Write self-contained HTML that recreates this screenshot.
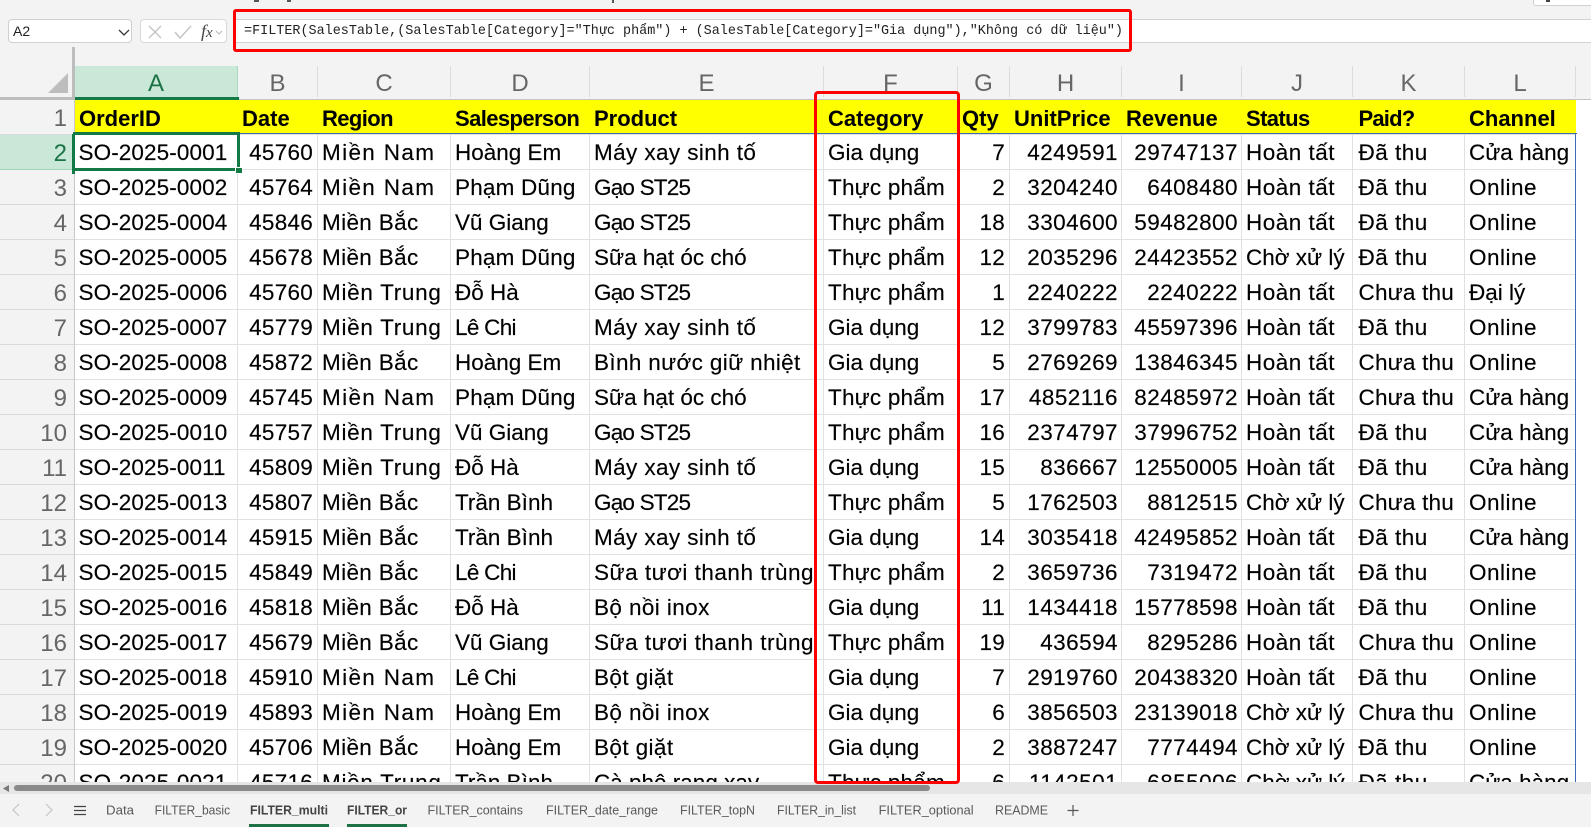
<!DOCTYPE html>
<html lang="vi"><head><meta charset="utf-8"><title>Excel FILTER</title>
<style>
html,body{margin:0;padding:0;width:1591px;height:827px;overflow:hidden;background:#f3f3f3}
body{position:relative;font-family:"Liberation Sans","DejaVu Sans",sans-serif;color:#000}
.a{position:absolute;box-sizing:border-box}
#sheet{position:absolute;left:0;top:100px;width:1591px;height:682px;overflow:hidden;background:#fff}
table{border-collapse:separate;border-spacing:0;table-layout:fixed;width:1576px;position:absolute;left:0;top:0}
td,th{box-sizing:border-box;height:35px;padding:2px 4px 0;line-height:32px;font-size:22.5px;font-weight:400;white-space:nowrap;overflow:hidden;text-align:left;border-right:1px solid #e1e1e1;border-bottom:1px solid #e1e1e1}
td{-webkit-text-stroke:.15px #000}
th{padding-top:3px;line-height:31px}
td.n{text-align:right;padding-right:4px;letter-spacing:.25px}
td:nth-child(2){letter-spacing:.1px;padding-left:3.5px}
td:nth-child(9),td:nth-child(10){letter-spacing:.45px;padding-right:3px}
td:nth-child(12),th:nth-child(12){padding-left:5.5px}
td.h,th.h{background:#f3f3f3;color:#666;font-size:24px;font-weight:400;text-align:right;padding-right:7px;padding-top:3px;line-height:31px;border-right:1px solid #c8c8c8;border-bottom:1px solid #d9d9d9;letter-spacing:0;-webkit-text-stroke:0}
tr.head th:not(.h){background:#ff0;font-size:22px;font-weight:700;border-right:0;border-bottom:1px solid #e1e1e1}
td.h.sel{background:#c9e8d7;color:#1c7346;border-bottom-color:#9fd5b7}
.col{position:absolute;top:66px;height:31px;text-align:center;color:#666;font-size:24px;line-height:35px;border-right:1px solid #dcdcdc;box-sizing:border-box}
.m{letter-spacing:.5px}.g{letter-spacing:-.8px}.w{letter-spacing:.4px}.t{letter-spacing:.5px}
.nm{letter-spacing:1.35px}.tr{letter-spacing:.7px}.bc{letter-spacing:.35px}.c{letter-spacing:-.7px}.ph{letter-spacing:.2px}
.tg{letter-spacing:-.6px}
</style></head><body>

<!-- top strip remnants -->
<div class="a" style="left:254px;top:0;width:5px;height:2px;background:#555"></div>
<div class="a" style="left:287px;top:0;width:4px;height:2px;background:#555"></div>
<div class="a" style="left:612px;top:0;width:2px;height:3px;background:#555"></div>
<div class="a" style="left:1533px;top:-6px;width:60px;height:12px;background:#fff;border:1px solid #d0d0d0;border-radius:3px"></div>
<div class="a" style="left:1546px;top:0;width:4px;height:2px;background:#444"></div>

<!-- formula bar -->
<div class="a" style="left:8px;top:19px;width:124px;height:24px;background:#fff;border:1px solid #d0d0d0;border-radius:4px"></div>
<div class="a" style="left:13px;top:22px;font-size:14px;line-height:18px;color:#222">A2</div>
<svg class="a" style="left:117px;top:28px" width="14" height="9"><path d="M2 2 L7 7 L12 2" fill="none" stroke="#333" stroke-width="1.3"/></svg>
<div class="a" style="left:140px;top:19px;width:87px;height:24px;background:#fff;border:1px solid #d8d8d8;border-radius:4px"></div>
<svg class="a" style="left:147px;top:24px" width="80" height="16">
<path d="M2 2 L14 14 M14 2 L2 14" stroke="#c4c4c4" stroke-width="1.4" fill="none"/>
<path d="M28 8 L33 14 L44 2" stroke="#c4c4c4" stroke-width="1.4" fill="none"/>
<path d="M69 7 L72 10 L75 7" stroke="#b5b5b5" stroke-width="1" fill="none"/>
</svg>
<div class="a" style="left:201px;top:22px;font-family:'Liberation Serif',serif;font-style:italic;font-size:18px;line-height:19px;color:#444">f<span style="font-size:15px">x</span></div>
<div class="a" style="left:233px;top:19px;width:1358px;height:24px;background:#fff;border-top:1px solid #d2d2d2;border-bottom:1px solid #d2d2d2"></div>
<div class="a" style="left:244px;top:23px;font-family:'Liberation Mono','DejaVu Sans Mono',monospace;font-size:13.45px;line-height:18px;white-space:pre;color:#222">=FILTER(SalesTable,(SalesTable[Category]="Thực phẩm") + (SalesTable[Category]="Gia dụng"),"Không có dữ liệu")</div>

<!-- column headers -->
<div class="a" style="left:0;top:66px;width:75px;height:31px;background:#f3f3f3"></div>
<div class="col" style="left:75px;width:163px;background:#c9e8d7;color:#1c7346;border-right-color:#a9d8be">A</div>
<div class="col" style="left:238px;width:80px">B</div>
<div class="col" style="left:318px;width:133px">C</div>
<div class="col" style="left:451px;width:139px">D</div>
<div class="col" style="left:590px;width:234px">E</div>
<div class="col" style="left:824px;width:134px">F</div>
<div class="col" style="left:958px;width:52px">G</div>
<div class="col" style="left:1010px;width:112px">H</div>
<div class="col" style="left:1122px;width:120px">I</div>
<div class="col" style="left:1242px;width:111px">J</div>
<div class="col" style="left:1353px;width:112px">K</div>
<div class="col" style="left:1465px;width:111px">L</div>
<svg class="a" style="left:46px;top:71px" width="24" height="24"><path d="M22 2 V22 H2 Z" fill="#bdbdbd"/></svg>
<div class="a" style="left:72px;top:47px;width:3px;height:53px;background:#bdbdbd"></div>
<div class="a" style="left:0;top:97px;width:75px;height:3px;background:#bdbdbd"></div>
<div class="a" style="left:75px;top:99px;width:1516px;height:1px;background:#c4c4c4"></div>

<!-- grid -->
<div id="sheet">
<table>
<colgroup><col style="width:75px"><col style="width:163px"><col style="width:80px"><col style="width:133px"><col style="width:139px"><col style="width:234px"><col style="width:134px"><col style="width:52px"><col style="width:112px"><col style="width:120px"><col style="width:111px"><col style="width:112px"><col style="width:111px"></colgroup>
<tr class="head"><th class="h">1</th><th>OrderID</th><th>Date</th><th class="tg">Region</th><th class="tg">Salesperson</th><th>Product</th><th>Category</th><th>Qty</th><th>UnitPrice</th><th>Revenue</th><th class="tg">Status</th><th class="g">Paid?</th><th>Channel</th></tr>
<tr><td class="h sel">2</td><td>SO-2025-0001</td><td class="n">45760</td><td class="nm">Miền Nam</td><td>Hoàng Em</td><td class="w">Máy xay sinh tố</td><td>Gia dụng</td><td class="n">7</td><td class="n">4249591</td><td class="n">29747137</td><td class="t">Hoàn tất</td><td class="t">Đã thu</td><td>Cửa hàng</td></tr>
<tr><td class="h">3</td><td>SO-2025-0002</td><td class="n">45764</td><td class="nm">Miền Nam</td><td class="ph">Phạm Dũng</td><td class="g">Gạo ST25</td><td class="ph">Thực phẩm</td><td class="n">2</td><td class="n">3204240</td><td class="n">6408480</td><td class="t">Hoàn tất</td><td class="t">Đã thu</td><td class="t">Online</td></tr>
<tr><td class="h">4</td><td>SO-2025-0004</td><td class="n">45846</td><td class="bc">Miền Bắc</td><td>Vũ Giang</td><td class="g">Gạo ST25</td><td class="ph">Thực phẩm</td><td class="n">18</td><td class="n">3304600</td><td class="n">59482800</td><td class="t">Hoàn tất</td><td class="t">Đã thu</td><td class="t">Online</td></tr>
<tr><td class="h">5</td><td>SO-2025-0005</td><td class="n">45678</td><td class="bc">Miền Bắc</td><td class="ph">Phạm Dũng</td><td>Sữa hạt óc chó</td><td class="ph">Thực phẩm</td><td class="n">12</td><td class="n">2035296</td><td class="n">24423552</td><td>Chờ xử lý</td><td class="t">Đã thu</td><td class="t">Online</td></tr>
<tr><td class="h">6</td><td>SO-2025-0006</td><td class="n">45760</td><td class="tr">Miền Trung</td><td>Đỗ Hà</td><td class="g">Gạo ST25</td><td class="ph">Thực phẩm</td><td class="n">1</td><td class="n">2240222</td><td class="n">2240222</td><td class="t">Hoàn tất</td><td class="ph">Chưa thu</td><td>Đại lý</td></tr>
<tr><td class="h">7</td><td>SO-2025-0007</td><td class="n">45779</td><td class="tr">Miền Trung</td><td class="c">Lê Chi</td><td class="w">Máy xay sinh tố</td><td>Gia dụng</td><td class="n">12</td><td class="n">3799783</td><td class="n">45597396</td><td class="t">Hoàn tất</td><td class="t">Đã thu</td><td class="t">Online</td></tr>
<tr><td class="h">8</td><td>SO-2025-0008</td><td class="n">45872</td><td class="bc">Miền Bắc</td><td>Hoàng Em</td><td class="bc">Bình nước giữ nhiệt</td><td>Gia dụng</td><td class="n">5</td><td class="n">2769269</td><td class="n">13846345</td><td class="t">Hoàn tất</td><td class="ph">Chưa thu</td><td class="t">Online</td></tr>
<tr><td class="h">9</td><td>SO-2025-0009</td><td class="n">45745</td><td class="nm">Miền Nam</td><td class="ph">Phạm Dũng</td><td>Sữa hạt óc chó</td><td class="ph">Thực phẩm</td><td class="n">17</td><td class="n">4852116</td><td class="n">82485972</td><td class="t">Hoàn tất</td><td class="ph">Chưa thu</td><td>Cửa hàng</td></tr>
<tr><td class="h">10</td><td>SO-2025-0010</td><td class="n">45757</td><td class="tr">Miền Trung</td><td>Vũ Giang</td><td class="g">Gạo ST25</td><td class="ph">Thực phẩm</td><td class="n">16</td><td class="n">2374797</td><td class="n">37996752</td><td class="t">Hoàn tất</td><td class="t">Đã thu</td><td>Cửa hàng</td></tr>
<tr><td class="h">11</td><td>SO-2025-0011</td><td class="n">45809</td><td class="tr">Miền Trung</td><td>Đỗ Hà</td><td class="w">Máy xay sinh tố</td><td>Gia dụng</td><td class="n">15</td><td class="n">836667</td><td class="n">12550005</td><td class="t">Hoàn tất</td><td class="t">Đã thu</td><td>Cửa hàng</td></tr>
<tr><td class="h">12</td><td>SO-2025-0013</td><td class="n">45807</td><td class="bc">Miền Bắc</td><td>Trần Bình</td><td class="g">Gạo ST25</td><td class="ph">Thực phẩm</td><td class="n">5</td><td class="n">1762503</td><td class="n">8812515</td><td>Chờ xử lý</td><td class="ph">Chưa thu</td><td class="t">Online</td></tr>
<tr><td class="h">13</td><td>SO-2025-0014</td><td class="n">45915</td><td class="bc">Miền Bắc</td><td>Trần Bình</td><td class="w">Máy xay sinh tố</td><td>Gia dụng</td><td class="n">14</td><td class="n">3035418</td><td class="n">42495852</td><td class="t">Hoàn tất</td><td class="t">Đã thu</td><td>Cửa hàng</td></tr>
<tr><td class="h">14</td><td>SO-2025-0015</td><td class="n">45849</td><td class="bc">Miền Bắc</td><td class="c">Lê Chi</td><td class="m">Sữa tươi thanh trùng</td><td class="ph">Thực phẩm</td><td class="n">2</td><td class="n">3659736</td><td class="n">7319472</td><td class="t">Hoàn tất</td><td class="t">Đã thu</td><td class="t">Online</td></tr>
<tr><td class="h">15</td><td>SO-2025-0016</td><td class="n">45818</td><td class="bc">Miền Bắc</td><td>Đỗ Hà</td><td class="w">Bộ nồi inox</td><td>Gia dụng</td><td class="n">11</td><td class="n">1434418</td><td class="n">15778598</td><td class="t">Hoàn tất</td><td class="t">Đã thu</td><td class="t">Online</td></tr>
<tr><td class="h">16</td><td>SO-2025-0017</td><td class="n">45679</td><td class="bc">Miền Bắc</td><td>Vũ Giang</td><td class="m">Sữa tươi thanh trùng</td><td class="ph">Thực phẩm</td><td class="n">19</td><td class="n">436594</td><td class="n">8295286</td><td class="t">Hoàn tất</td><td class="ph">Chưa thu</td><td class="t">Online</td></tr>
<tr><td class="h">17</td><td>SO-2025-0018</td><td class="n">45910</td><td class="nm">Miền Nam</td><td class="c">Lê Chi</td><td class="w">Bột giặt</td><td>Gia dụng</td><td class="n">7</td><td class="n">2919760</td><td class="n">20438320</td><td class="t">Hoàn tất</td><td class="t">Đã thu</td><td class="t">Online</td></tr>
<tr><td class="h">18</td><td>SO-2025-0019</td><td class="n">45893</td><td class="nm">Miền Nam</td><td>Hoàng Em</td><td class="w">Bộ nồi inox</td><td>Gia dụng</td><td class="n">6</td><td class="n">3856503</td><td class="n">23139018</td><td>Chờ xử lý</td><td class="ph">Chưa thu</td><td class="t">Online</td></tr>
<tr><td class="h">19</td><td>SO-2025-0020</td><td class="n">45706</td><td class="bc">Miền Bắc</td><td>Hoàng Em</td><td class="w">Bột giặt</td><td>Gia dụng</td><td class="n">2</td><td class="n">3887247</td><td class="n">7774494</td><td>Chờ xử lý</td><td class="t">Đã thu</td><td class="t">Online</td></tr>
<tr><td class="h">20</td><td>SO-2025-0021</td><td class="n">45716</td><td class="tr">Miền Trung</td><td>Trần Bình</td><td>Cà phê rang xay</td><td class="ph">Thực phẩm</td><td class="n">6</td><td class="n">1142501</td><td class="n">6855006</td><td>Chờ xử lý</td><td class="t">Đã thu</td><td>Cửa hàng</td></tr>
</table>
</div>

<!-- table edge -->
<div class="a" style="left:240px;top:133px;width:1337px;height:1px;background:#3c6cb4"></div>
<div class="a" style="left:1575px;top:133px;width:1px;height:649px;background:#3c6cb4"></div>

<!-- selection -->
<div class="a" style="left:75px;top:97px;width:164px;height:3px;background:#137a45"></div>
<div class="a" style="left:72px;top:134px;width:3px;height:40px;background:#137a45"></div>
<div class="a" style="left:73px;top:132px;width:167px;height:3px;background:#137a45"></div>
<div class="a" style="left:73px;top:168px;width:167px;height:3px;background:#137a45"></div>
<div class="a" style="left:237px;top:132px;width:3px;height:38px;background:#137a45"></div>
<div class="a" style="left:235px;top:167px;width:8px;height:7px;background:#137a45;border:1px solid #fff"></div>

<!-- scrollbar -->
<div class="a" style="left:0;top:782px;width:1591px;height:12px;background:#e6e6e6"></div>
<div class="a" style="left:14px;top:785px;width:916px;height:6px;background:#8a8a8a;border-radius:3px"></div>
<svg class="a" style="left:2px;top:784px" width="8" height="9"><path d="M1 4.5 L7 1 V8 Z" fill="#777"/></svg>

<!-- tabs -->
<svg class="a" style="left:0;top:794px" width="1591" height="33">
<path d="M19 10 L13 16 L19 22" fill="none" stroke="#c4c4c4" stroke-width="1.2"/>
<path d="M46 10 L52 16 L46 22" fill="none" stroke="#c4c4c4" stroke-width="1.2"/>
<path d="M74 12.5 H86 M74 16.5 H86 M74 20.5 H86" stroke="#444" stroke-width="1.2"/>
<g font-family="Liberation Sans, sans-serif" font-size="12.5" fill="#595959">
<text x="106" y="20.5" textLength="28" lengthAdjust="spacingAndGlyphs">Data</text>
<text x="154.6" y="20.5" textLength="75.5" lengthAdjust="spacingAndGlyphs">FILTER_basic</text>
<text x="250" y="20.5" textLength="78" lengthAdjust="spacingAndGlyphs" font-weight="700" fill="#444">FILTER_multi</text>
<text x="347" y="20.5" textLength="60" lengthAdjust="spacingAndGlyphs" font-weight="700" fill="#444">FILTER_or</text>
<text x="427.5" y="20.5" textLength="95.5" lengthAdjust="spacingAndGlyphs">FILTER_contains</text>
<text x="546" y="20.5" textLength="112" lengthAdjust="spacingAndGlyphs">FILTER_date_range</text>
<text x="680" y="20.5" textLength="75" lengthAdjust="spacingAndGlyphs">FILTER_topN</text>
<text x="777" y="20.5" textLength="79" lengthAdjust="spacingAndGlyphs">FILTER_in_list</text>
<text x="878.6" y="20.5" textLength="95" lengthAdjust="spacingAndGlyphs">FILTER_optional</text>
<text x="995" y="20.5" textLength="53" lengthAdjust="spacingAndGlyphs">README</text>
</g>
<path d="M1073 11 V22 M1067.5 16.5 H1078.5" stroke="#555" stroke-width="1.2"/>
<rect x="249" y="30" width="80" height="3" fill="#1e7145"/>
<rect x="347" y="30" width="60" height="3" fill="#1e7145"/>
</svg>

<!-- red annotation boxes -->
<div class="a" style="left:233px;top:9px;width:899px;height:43px;border:3.5px solid #f00;border-radius:3px"></div>
<div class="a" style="left:814px;top:91px;width:146px;height:693px;border:3.5px solid #f00;border-radius:4px"></div>
</body></html>
